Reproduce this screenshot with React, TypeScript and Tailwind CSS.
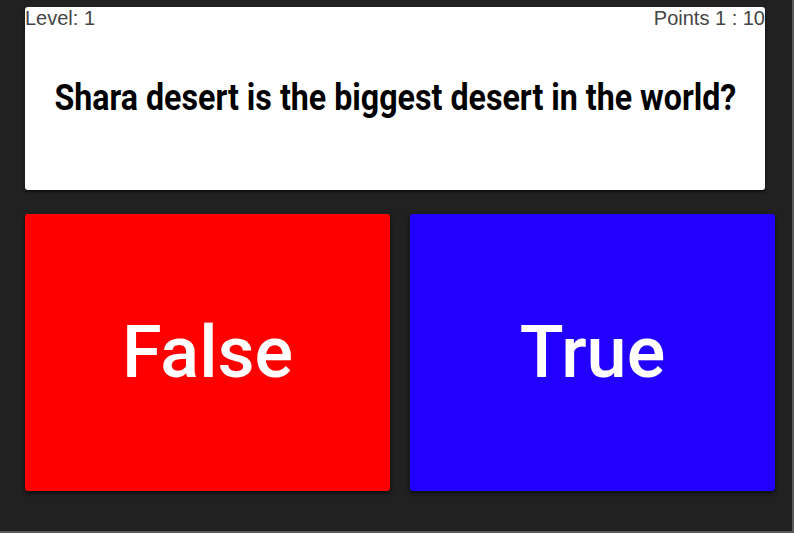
export default function App() {
  return (
    <div className="w-[794px] h-[533px] bg-[#212121] border-r-2 border-b-2 border-r-[#5a5a5a] border-b-[#5a5a5a] overflow-hidden">
      <div className="pl-[25px] pt-[7px]">
        {/* Question card */}
        <div className="w-[740px] h-[183px] bg-white rounded-[3px] shadow-[0_2px_3px_rgba(0,0,0,0.6)] flex flex-col">
          <div className="flex justify-between text-[20px] leading-[22px] text-[#444] font-['Liberation_Sans',Arial,sans-serif]">
            <span>Level: 1</span>
            <span>Points 1 : 10</span>
          </div>
          <div className="flex justify-center pt-[49px]">
            <span className="inline-block origin-center scale-x-[0.894] whitespace-nowrap text-[36px] leading-[40px] font-bold text-black font-['Roboto',sans-serif]">
              Shara desert is the biggest desert in the world?
            </span>
          </div>
        </div>

        {/* Answers */}
        <div className="mt-[24px] flex gap-[20px]">
          <AnswerButton label="False" color="bg-[#ff0000]" />
          <AnswerButton label="True" color="bg-[#2200ff]" />
        </div>
      </div>
    </div>
  );
}

function AnswerButton({ label, color }: { label: string; color: string }) {
  return (
    <button
      className={`w-[365px] h-[277px] rounded-[3px] ${color} shadow-[0_2px_4px_rgba(0,0,0,0.7)] flex items-center justify-center text-white text-[72px] font-medium font-['Roboto',sans-serif]`}
    >
      {label}
    </button>
  );
}
